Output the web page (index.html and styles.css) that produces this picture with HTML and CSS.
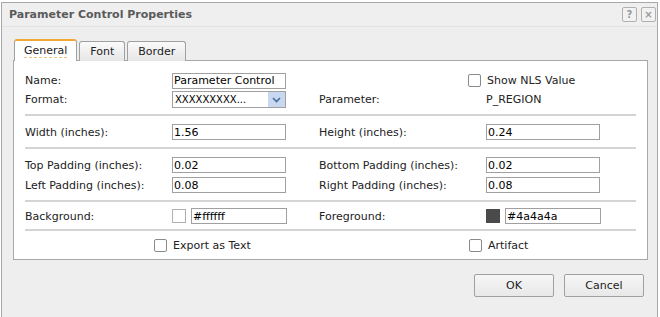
FILE: index.html
```html
<!DOCTYPE html>
<html lang="en">
  <head>
    <meta charset="UTF-8" />
    <title>Parameter Control Properties</title>
    <link rel="stylesheet" href="styles.css">
  </head>
  <body>
    <div class="dialog">
      <div class="dialog-title">
        <span>Parameter Control Properties</span>
        <div class="title-buttons">
          <span class="title-btn">?</span>
          <span class="title-btn">&times;</span>
        </div>
      </div>

      <div class="dialog-body">
        <div class="tabs">
          <div class="tab active"><span>General</span></div>
          <div class="tab">Font</div>
          <div class="tab">Border</div>
        </div>

        <div class="panel">
          <div class="group tight">
            <label>Name:</label>
            <input type="text" value="Parameter Control" />
            <span></span>
            <label class="check shift"><span class="box"></span>Show NLS Value</label>

            <label>Format:</label>
            <div class="select">
              <span>XXXXXXXXX...</span>
              <span class="arrow">
                <svg width="9" height="6" viewBox="0 0 9 6"><path d="M1 1 L4.5 4.5 L8 1" fill="none" stroke="#4a6a9a" stroke-width="1.6"/></svg>
              </span>
            </div>
            <label>Parameter:</label>
            <span class="value">P_REGION</span>
          </div>
          <hr />
          <div class="group">
            <label>Width (inches):</label>
            <input type="text" value="1.56" />
            <label>Height (inches):</label>
            <input type="text" value="0.24" />
          </div>
          <hr />
          <div class="group">
            <label>Top Padding (inches):</label>
            <input type="text" value="0.02" />
            <label>Bottom Padding (inches):</label>
            <input type="text" value="0.02" />

            <label>Left Padding (inches):</label>
            <input type="text" value="0.08" />
            <label>Right Padding (inches):</label>
            <input type="text" value="0.08" />
          </div>
          <hr />
          <div class="group compact">
            <label>Background:</label>
            <div class="color">
              <span class="swatch"></span>
              <input type="text" value="#ffffff" />
            </div>
            <label>Foreground:</label>
            <div class="color">
              <span class="swatch dark"></span>
              <input type="text" value="#4a4a4a" />
            </div>
          </div>
          <hr />
          <div class="checks">
            <label class="check"><span class="box"></span>Export as Text</label>
            <label class="check"><span class="box"></span>Artifact</label>
          </div>
        </div>

        <div class="footer">
          <button>OK</button>
          <button>Cancel</button>
        </div>
      </div>
    </div>
  </body>
</html>
```

FILE: styles.css
```css
body {
  margin: 0;
  padding: 0;
  background-color: #fff;
  font-family: "DejaVu Sans", Verdana, sans-serif;
  font-size: 11px;
  color: #222;
}
.dialog {
  margin: 2px 0 0 1px;
  width: 657px;
  height: 320px;
  background-color: #eeeeee;
  border: 1px solid #a8a8a8;
  box-sizing: border-box;
}
.dialog-title {
  height: 23px;
  display: flex;
  justify-content: space-between;
  align-items: center;
  padding: 0 1px 0 7px;
  border-bottom: 1px solid #e2e2e2;
  background-color: #efefef;
  font-weight: bold;
  font-size: 11px;
  color: #5a5a5a;
}
.title-buttons {
  display: flex;
  gap: 4px;
}
.title-btn {
  width: 13px;
  height: 13px;
  border: 1px solid #b0b0b0;
  border-radius: 2px;
  display: flex;
  justify-content: center;
  align-items: center;
  font-size: 10px;
  color: #999;
  background-color: #f2f2f2;
}
.dialog-body {
  padding: 12px 9px 0 11px;
}
.tabs {
  display: flex;
  gap: 2px;
  align-items: flex-end;
  height: 22px;
  margin-bottom: -1px;
  padding-left: 1px;
}
.tab {
  height: 19px;
  padding: 0 10px;
  border: 1px solid #a0a0a0;
  border-bottom: none;
  border-radius: 3px 3px 0 0;
  background: linear-gradient(#fafafa, #e6e6e6);
  display: flex;
  align-items: center;
  font-size: 11px;
  color: #222;
}
.tab.active {
  height: 20px;
  padding: 0 9px;
  background: #fff;
  border-top: 2px solid #f0a838;
  position: relative;
  z-index: 1;
}
.tab.active span {
  border-bottom: 1px dashed #f0c080;
}
.panel {
  background-color: #fff;
  border: 1px solid #a8a8a8;
  height: 200px;
  box-sizing: border-box;
  padding: 10px 10px 0 11px;
}
.group {
  display: grid;
  grid-template-columns: 147px 147px 167px 1fr;
  grid-auto-rows: 20px;
  align-items: center;
}
.group.tight {
  grid-auto-rows: 19px;
}
.group.compact {
  grid-auto-rows: 16px;
}
.group input {
  width: 114px;
  height: 16px;
  box-sizing: border-box;
  border: 1px solid #a0a0a0;
  padding: 0 1px;
  font-family: inherit;
  font-size: 11px;
  color: #000;
}
.value {
  color: #222;
}
.select {
  width: 114px;
  height: 17px;
  box-sizing: border-box;
  border: 1px solid #a0a0a0;
  display: flex;
  align-items: center;
  justify-content: space-between;
  font-size: 10px;
  color: #000;
  padding-left: 2px;
}
.select .arrow {
  width: 17px;
  height: 15px;
  background-color: #c8d8f0;
  display: flex;
  justify-content: center;
  align-items: center;
}
.color {
  display: flex;
  gap: 5px;
  align-items: center;
}
.color input {
  width: 96px;
}
.swatch {
  width: 14px;
  height: 14px;
  border: 1px solid #b0b0b0;
  box-sizing: border-box;
  background-color: #fff;
}
.swatch.dark {
  background-color: #4a4a4a;
  border-color: #4a4a4a;
}
.check {
  display: flex;
  align-items: center;
  gap: 6px;
}
.check.shift {
  margin-left: -18px;
}
.box {
  width: 11px;
  height: 11px;
  border: 1px solid #8a8a8a;
  border-radius: 2px;
  background-color: #fff;
}
hr {
  border: none;
  border-top: 2px solid #d4d4d4;
  margin: 5px 0 6px 0;
  width: 611px;
}
.checks {
  display: grid;
  grid-template-columns: 315px 1fr;
  height: 16px;
  align-items: center;
  padding-left: 129px;
}
.footer {
  display: flex;
  justify-content: flex-end;
  gap: 10px;
  padding: 14px 4px 0 0;
}
.footer button {
  width: 80px;
  height: 23px;
  background: linear-gradient(#f6f6f6, #e8e8e8);
  border: 1px solid #a0a0a0;
  border-radius: 2px;
  font-family: inherit;
  font-size: 11px;
  color: #222;
}
```
